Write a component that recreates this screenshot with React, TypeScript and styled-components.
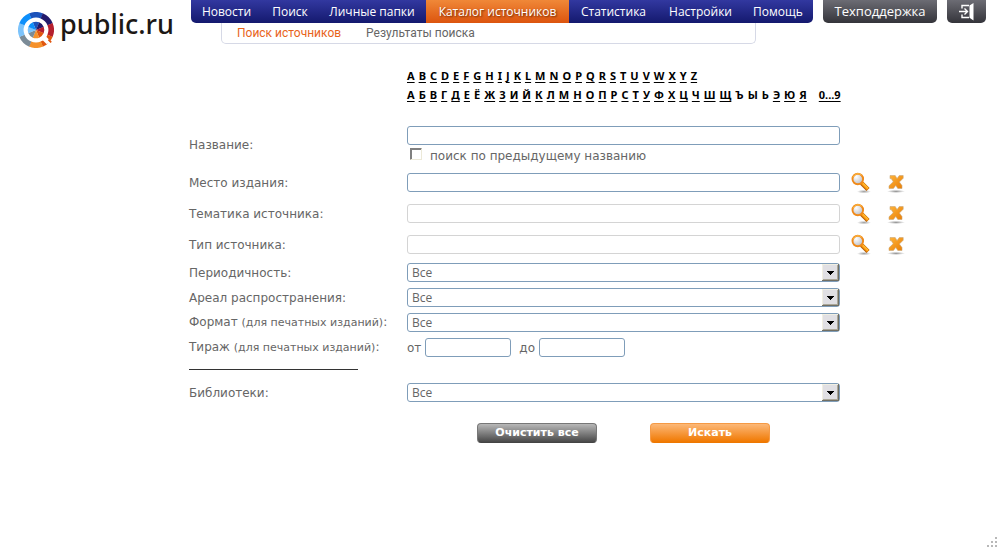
import React from "react";
import styled, { createGlobalStyle, css } from "styled-components";

const Global = createGlobalStyle`
  *, *::before, *::after { box-sizing: border-box; }
  html, body, #root { min-height: 100vh; }
  body {
    margin: 0;
    background: #fff;
    color: #666;
    font: 12px/16px "DejaVu Sans", sans-serif;
  }
  #root { display: flex; flex-direction: column; }
`;

const uiFont = `"Open Sans", "Noto Sans", sans-serif`;

/* ---------- header ---------- */

const Header = styled.header`
  display: flex;
  align-items: flex-start;
`;

const Logo = styled.a`
  flex: none;
  display: flex;
  align-items: center;
  gap: 6px;
  width: 191px;
  padding: 12px 0 0 18px;
  color: #1c1815;
  font: 500 27px/36px "Noto Sans", sans-serif;
  text-decoration: none;
`;

const LogoText = styled.span`
  line-height: 24px;
  padding-bottom: 12px;
`;

const Menus = styled.div`
  flex: none;
`;

const barShape = css`
  height: 23px;
  border-radius: 0 0 5px 5px;
  overflow: hidden;
`;

const MainNav = styled.nav`
  ${barShape}
  display: grid;
  grid-template-columns: 71px 56px 108px 143px 89px 85px 70px;
  background: linear-gradient(#3238a0, #14196e);
`;

const NavLink = styled.a<{ $active?: boolean }>`
  color: #fff;
  text-align: center;
  text-decoration: none;
  white-space: nowrap;
  font: 500 12px/23px ${uiFont};
  ${(p) =>
    p.$active &&
    css`
      background: linear-gradient(#f08838, #dc540e);
      text-shadow: 1px 1px 2px #6b2400;
    `}
`;

const SubNav = styled.nav`
  display: flex;
  gap: 25px;
  height: 21px;
  margin: 0 57px 0 30px;
  padding-left: 15px;
  border: 1px solid #d6d9e6;
  border-top: 0;
  border-radius: 0 0 5px 5px;
`;

const SubLink = styled.a<{ $active?: boolean }>`
  color: ${(p) => (p.$active ? "#e8641b" : "#666")};
  font: 12px/20px Roboto, sans-serif;
  text-decoration: none;
  white-space: nowrap;
`;

const grayBar = css`
  ${barShape}
  flex: none;
  display: flex;
  align-items: center;
  justify-content: center;
  margin-left: 10px;
  background: linear-gradient(#6c6c74, #34343a);
`;

const SupportLink = styled.a`
  ${grayBar}
  width: 114px;
  color: #fff;
  font: 13px/23px ${uiFont};
  text-decoration: none;
`;

const ExitButton = styled.button`
  ${grayBar}
  width: 39px;
  padding: 0;
  border: 0;
`;

/* ---------- form ---------- */

const Main = styled.main`
  flex: 1;
  padding: 18px 14px 0 189px;
`;

const Alphabets = styled.div`
  margin-left: 218px;
  padding-bottom: 19px;
`;

const LetterRow = styled.div`
  display: flex;
  gap: 4px;
  height: 19px;
  color: #000;
  font: bold 11px/20px "Noto Sans", sans-serif;
`;

const Letter = styled.a<{ $apart?: boolean }>`
  color: #000;
  text-underline-offset: 2px;
  text-decoration-thickness: 1px;
  text-decoration-skip-ink: none;
  margin-left: ${(p) => (p.$apart ? "8px" : "0")};
`;

const Row = styled.div<{ $height: number }>`
  display: grid;
  grid-template-columns: 218px minmax(0, 433px) auto;
  align-items: center;
  min-height: ${(p) => p.$height}px;
`;

const Label = styled.label`
  white-space: nowrap;
`;

const Note = styled.span`
  font-size: 11px;
`;

const NameFields = styled.div`
  display: flex;
  flex-direction: column;
  gap: 3px;
`;

const TextInput = styled.input<{ $muted?: boolean; $short?: boolean }>`
  width: ${(p) => (p.$short ? "86px" : "100%")};
  height: 19px;
  padding: 0 4px;
  border: 1px solid ${(p) => (p.$muted ? "#d4d4d4" : "#7f9db9")};
  border-radius: 3px;
  background: #fff;
  color: #666;
  font: 12px/16px ${uiFont};
`;

const CheckLabel = styled.label`
  display: flex;
  align-items: center;
  gap: 8px;
  padding-left: 3px;
  height: 16px;
`;

const Check = styled.input`
  appearance: none;
  width: 12px;
  height: 12px;
  margin: 0 0 4px;
  background: #fff;
  border: 1px solid;
  border-color: #808080 #ece9d8 #ece9d8 #808080;
  box-shadow: inset 1px 1px #808080;
`;

const Icons = styled.div`
  display: flex;
  gap: 15px;
  padding-left: 11px;
`;

const IconButton = styled.button`
  display: block;
  width: 21px;
  height: 22px;
  padding: 0;
  border: 0;
  background: none;
`;

const SelectBox = styled.div`
  position: relative;
`;

const Select = styled.select`
  appearance: none;
  display: block;
  width: 100%;
  height: 19px;
  padding: 0 20px 0 4px;
  border: 1px solid #7f9db9;
  border-radius: 3px;
  background: #fff;
  color: #666;
  font: 12px/17px ${uiFont};
`;

const Arrow = styled.svg`
  position: absolute;
  top: 1px;
  right: 0;
  pointer-events: none;
`;

const Range = styled.div`
  display: flex;
  align-items: center;
`;

const RangeLabel = styled.label`
  display: flex;
  align-items: center;
  gap: 4px;
  margin-right: 8px;
`;

const Rule = styled.hr`
  width: 169px;
  height: 1px;
  margin: 9px 0 10px;
  border: 0;
  background: #333;
`;

const Actions = styled.div`
  display: flex;
  gap: 53px;
  padding: 18px 0 0 288px;
`;

const Action = styled.button<{ $primary?: boolean }>`
  width: 120px;
  height: 20px;
  padding: 0;
  border: 1px solid ${(p) => (p.$primary ? "#f59a45" : "#777")};
  border-bottom-color: ${(p) => (p.$primary ? "#ee7700" : "#444")};
  border-radius: 4px;
  background: ${(p) =>
    p.$primary ? "linear-gradient(#fcb878, #f07800)" : "linear-gradient(#b8b8b8, #484848)"};
  color: #fff;
  font: bold 11px/16px "DejaVu Sans", sans-serif;
`;

const Footer = styled.footer`
  display: flex;
  justify-content: flex-end;
  padding: 0 3px 3px 0;
`;

/* ---------- drawings ---------- */

const wheel = ["#1b52ba", "#231a6b", "#b5202f", "#e0560f", "#f5912b", "#7b8b97", "#7cc3fb", "#0d8ffb"];

const point = (r: number, deg: number) => {
  const a = (deg * Math.PI) / 180;
  return `${18 + r * Math.cos(a)} ${18 + r * Math.sin(a)}`;
};

const sector = (inner: number, outer: number, from: number, to: number) =>
  `M${point(inner, from)}L${point(outer, from)}A${outer} ${outer} 0 0 1 ${point(outer, to)}L${point(inner, to)}A${inner} ${inner} 0 0 0 ${point(inner, from)}Z`;

const LogoMark = () => (
  <svg width="36" height="36" viewBox="0 0 36 36" aria-hidden="true">
    {wheel.map((c, i) => (
      <g key={c} fill={c}>
        <path d={sector(12.4, 18, i * 45 - 113, i * 45 - 67)} />
        <path d={sector(0.1, 8.3, i * 45 - 113, i * 45 - 67)} />
      </g>
    ))}
    <path d="M25 25L30.5 30.5" stroke="#fff" strokeWidth="5" />
    <path d="M28.5 30.5L30.5 28.5L33 31L31 33Z" fill="#fff" />
    <path d="M31 27L33.8 29.8L32.6 31L29.8 28.2Z" fill="#e0560f" />
  </svg>
);

const ExitIcon = () => (
  <svg width="16" height="18" viewBox="0 0 16 18" fill="none" aria-hidden="true">
    <path d="M3 5.5V2.5H10M3 11.5V14.5H10" stroke="#fff" strokeWidth="1.4" />
    <path d="M0 8.5H8M5.5 5.5L8.5 8.5L5.5 11.5" stroke="#fff" strokeWidth="1.4" />
    <path d="M10.5 2.5L14.5 0V17.5L10.5 14.8Z" fill="#fff" />
  </svg>
);

const SearchIcon = () => (
  <svg width="21" height="22" viewBox="0 0 21 22" aria-hidden="true">
    <defs>
      <radialGradient id="lens" cx="35%" cy="30%" r="75%">
        <stop offset="0" stopColor="#fff" />
        <stop offset="1" stopColor="#b9bcc4" />
      </radialGradient>
      <radialGradient id="glassShade">
        <stop offset="0" stopColor="#777" stopOpacity=".7" />
        <stop offset="1" stopColor="#777" stopOpacity="0" />
      </radialGradient>
    </defs>
    <ellipse cx="13" cy="19.6" rx="7" ry="1.8" fill="url(#glassShade)" />
    <path d="M10.5 11L17 17.5" stroke="#b85f05" strokeWidth="4.4" />
    <path d="M10.5 10.6L17 17" stroke="#ff9d12" strokeWidth="2.8" />
    <path d="M12 11.4L17 16.3" stroke="#ffd24d" strokeWidth=".9" />
    <circle cx="6.8" cy="7" r="5.3" fill="url(#lens)" stroke="#f08a1a" strokeWidth="1.9" />
    <path d="M2 5.4A5.2 5.2 0 0 1 10.6 3.3" fill="none" stroke="#ffc14a" strokeWidth="1" />
  </svg>
);

const ClearIcon = () => (
  <svg width="21" height="22" viewBox="0 0 21 22" aria-hidden="true">
    <defs>
      <linearGradient id="cross" x1="0" y1="0" x2="1" y2="1">
        <stop offset="0" stopColor="#ffb43a" />
        <stop offset="1" stopColor="#e87d05" />
      </linearGradient>
      <radialGradient id="crossShade">
        <stop offset="0" stopColor="#666" stopOpacity=".7" />
        <stop offset="1" stopColor="#666" stopOpacity="0" />
      </radialGradient>
    </defs>
    <ellipse cx="9" cy="19.4" rx="9" ry="1.6" fill="url(#crossShade)" />
    <path
      d="M3 3.5H8.2L10 6.6L12.3 3.5H16.2V6.2L12.4 10L15 13.6V16.5H10.8L8.8 13.4L6.4 16.5H2V13.8L6.2 9.8L4.4 6.8L3 6.6Z"
      fill="url(#cross)"
      stroke="#c9a77a"
      strokeWidth=".6"
    />
  </svg>
);

const DropArrow = () => (
  <Arrow width="18" height="18" viewBox="0 0 18 18" shapeRendering="crispEdges" aria-hidden="true">
    <path d="M0 0H17V17H0Z" fill="#f1efe2" />
    <path d="M16 0H17V17H0V16H16Z" fill="#716f64" />
    <path d="M15 1H16V16H1V15H15Z" fill="#aca899" />
    <path d="M1 1H15V15H1Z" fill="#e0dfe3" />
    <path d="M5 7H12V8H11V9H10V10H9V11H8V10H7V9H6V8H5Z" fill="#000" />
  </Arrow>
);

const Grip = () => (
  <svg width="10" height="10" viewBox="0 0 10 10" fill="#b8b8b8" shapeRendering="crispEdges" aria-hidden="true">
    <path d="M8 0H10V2H8ZM4 4H6V6H4ZM8 4H10V6H8ZM0 8H2V10H0ZM4 8H6V10H4ZM8 8H10V10H8Z" />
  </svg>
);

/* ---------- page ---------- */

const sections = ["Новости", "Поиск", "Личные папки", "Каталог источников", "Статистика", "Настройки", "Помощь"];
const latin = "ABCDEFGHIJKLMNOPQRSTUVWXYZ".split("");
const cyrillic = "АБВГДЕЁЖЗИЙКЛМНОПРСТУФХЦЧШЩЪЫЬЭЮЯ".split("");
const unlinked = "ЁЪЫЬ";

const LookupRow = ({ id, label, muted }: { id: string; label: string; muted?: boolean }) => (
  <Row $height={31}>
    <Label htmlFor={id}>{label}</Label>
    <TextInput id={id} $muted={muted} readOnly={muted} />
    <Icons>
      <IconButton type="button" aria-label="Выбрать"><SearchIcon /></IconButton>
      <IconButton type="button" aria-label="Очистить"><ClearIcon /></IconButton>
    </Icons>
  </Row>
);

const SelectRow = ({ id, children }: { id: string; children: React.ReactNode }) => (
  <Row $height={25}>
    <Label htmlFor={id}>{children}</Label>
    <SelectBox>
      <Select id={id}><option>Все</option></Select>
      <DropArrow />
    </SelectBox>
  </Row>
);

export default function App() {
  return (
    <>
      <Global />
      <Header>
        <Logo href="#"><LogoMark /><LogoText>public.ru</LogoText></Logo>
        <Menus>
          <MainNav>
            {sections.map((s) => (
              <NavLink key={s} href="#" $active={s === "Каталог источников"}>{s}</NavLink>
            ))}
          </MainNav>
          <SubNav>
            <SubLink href="#" $active>Поиск источников</SubLink>
            <SubLink href="#">Результаты поиска</SubLink>
          </SubNav>
        </Menus>
        <SupportLink href="#">Техподдержка</SupportLink>
        <ExitButton type="button" aria-label="Выход"><ExitIcon /></ExitButton>
      </Header>
      <Main>
        <Alphabets>
          <LetterRow>
            {latin.map((l) => <Letter key={l} href="#">{l}</Letter>)}
          </LetterRow>
          <LetterRow>
            {cyrillic.map((l) =>
              unlinked.includes(l) ? <span key={l}>{l}</span> : <Letter key={l} href="#">{l}</Letter>
            )}
            <Letter href="#" $apart>0...9</Letter>
          </LetterRow>
        </Alphabets>
        <form>
          <Row $height={44}>
            <Label htmlFor="name">Название:</Label>
            <NameFields>
              <TextInput id="name" />
              <CheckLabel><Check type="checkbox" />поиск по предыдущему названию</CheckLabel>
            </NameFields>
          </Row>
          <LookupRow id="place" label="Место издания:" />
          <LookupRow id="topic" label="Тематика источника:" muted />
          <LookupRow id="kind" label="Тип источника:" muted />
          <SelectRow id="period">Периодичность:</SelectRow>
          <SelectRow id="area">Ареал распространения:</SelectRow>
          <SelectRow id="format">Формат <Note>(для печатных изданий)</Note>:</SelectRow>
          <Row $height={25}>
            <span>Тираж <Note>(для печатных изданий)</Note>:</span>
            <Range>
              <RangeLabel>от <TextInput $short /></RangeLabel>
              <RangeLabel>до <TextInput $short /></RangeLabel>
            </Range>
          </Row>
          <Rule />
          <SelectRow id="libraries">Библиотеки:</SelectRow>
          <Actions>
            <Action type="reset">Очистить все</Action>
            <Action type="submit" $primary>Искать</Action>
          </Actions>
        </form>
      </Main>
      <Footer><Grip /></Footer>
    </>
  );
}
